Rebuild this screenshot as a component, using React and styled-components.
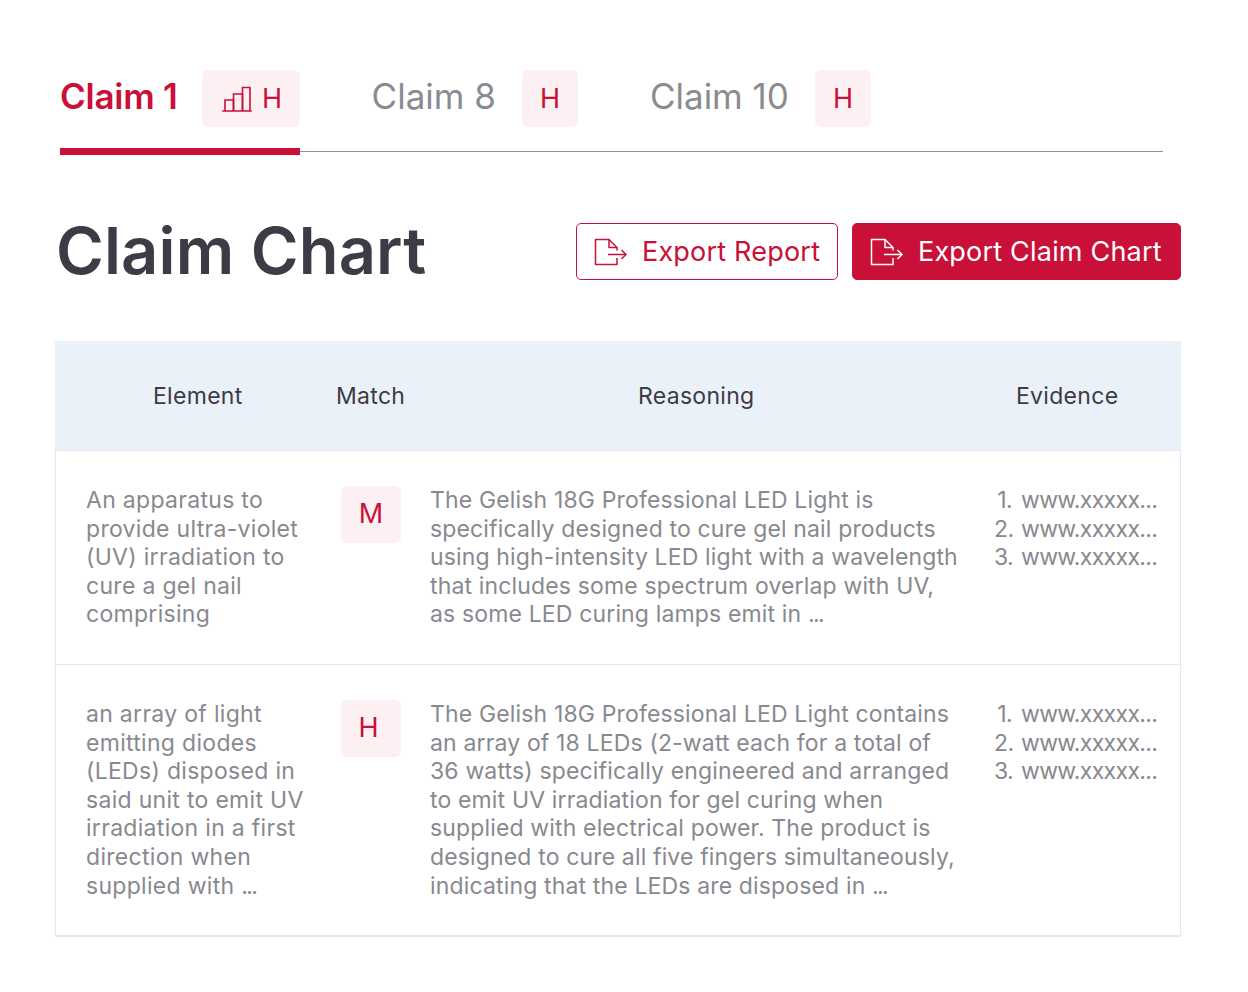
import React from 'react'
import styled, { createGlobalStyle } from 'styled-components'

const Global = createGlobalStyle`
  html, body { margin: 0; padding: 0; background: #fff; }
  body { font-family: Inter, "Noto Sans", "Liberation Sans", sans-serif; }
`

const RED = '#c81038'

const Page = styled.div`
  width: 1248px;
  height: 992px;
  box-sizing: border-box;
  padding: 70px 67px 0 55px;
  overflow: hidden;
`

const Tabs = styled.div`
  display: flex;
  margin: 0 18px 0 5px;
  border-bottom: 1px solid #8e8e93;
  height: 82px;
  box-sizing: border-box;
`

const Tab = styled.div`
  display: flex;
  align-items: flex-start;
  gap: ${p => p.$gap}px;
  height: 85px;
  box-sizing: border-box;
  margin-right: 72px;
  border-bottom: ${p => (p.$active ? `7px solid ${RED}` : '0')};
`

const TabLabel = styled.span`
  font-size: 35px;
  line-height: 52px;
  letter-spacing: ${p => (p.$active ? '-0.25px' : '0')};
  font-weight: ${p => (p.$active ? 600 : 400)};
  color: ${p => (p.$active ? RED : '#8a8b90')};
`

const Badge = styled.span`
  display: flex;
  align-items: center;
  justify-content: center;
  gap: ${p => p.$gap || 7}px;
  box-sizing: border-box;
  width: ${p => p.$w}px;
  height: 57px;
  padding-left: ${p => p.$pl || 0}px;
  border-radius: 6px;
  background: #fdf0f2;
  color: ${RED};
  font-size: 27px;
  font-weight: 400;
`

const TitleRow = styled.div`
  display: flex;
  justify-content: space-between;
  align-items: center;
  margin-top: 68px;
  height: 62px;
`

const Title = styled.h1`
  margin: 0 0 0 1px;
  font-size: 65px;
  font-weight: 600;
  letter-spacing: 0.1px;
  color: #3c3c46;
  line-height: 62px;
`

const Actions = styled.div`
  display: flex;
  gap: 14px;
`

const Button = styled.button`
  display: flex;
  align-items: center;
  gap: 15px;
  height: 57px;
  box-sizing: border-box;
  padding: 1px 17px 0;
  width: ${p => p.$w}px;
  border-radius: 5px;
  border: 1.5px solid ${RED};
  background: ${p => (p.$solid ? RED : '#fff')};
  color: ${p => (p.$solid ? '#fff' : RED)};
  font: inherit;
  font-size: 27px;
  letter-spacing: 0.2px;
  white-space: nowrap;
`

const Table = styled.div`
  margin-top: 59px;
  width: 1126px;
  box-sizing: border-box;
  border: 1px solid #e4e8f2;
  border-top: 0;
  border-bottom-width: 2px;
`

const Head = styled.div`
  display: grid;
  height: 109px;
  align-items: center;
  background: #ebf1f9;
  border-bottom: 1px solid #e4e8f2;
  margin: 0 -1px;
  font-size: 23px;
  letter-spacing: 0.3px;
  color: #3c3c46;
`

const HeadCell = styled.div`
  position: relative;
  left: ${p => p.$x}px;
  grid-column: 1;
  grid-row: 1;
`

const Row = styled.div`
  display: grid;
  grid-template-columns: 285px 89px 556px 1fr;
  box-sizing: border-box;
  height: ${p => p.$h}px;
  padding-top: 35px;
  border-bottom: ${p => (p.$last ? '0' : '1px solid #e4e8f2')};
  font-size: 23px;
  line-height: 28.6px;
  color: #88898e;
`

const Cell = styled.div`
  white-space: nowrap;
  padding-left: ${p => p.$pl || 0}px;
  letter-spacing: ${p => p.$ls};
`

const Line = styled.span`
  display: block;
`

const Dots = styled.span`
  letter-spacing: -1.6px;
`

const EvidenceList = styled.ol`
  margin: 0;
  padding: 0;
  list-style: none;
  display: grid;
  grid-template-columns: 18px auto;
  column-gap: 9px;
  justify-content: start;
`

const Num = styled.span`
  text-align: right;
`

const MatchBadge = styled(Badge)`
  width: 60px;
  padding-right: ${p => p.$pr}px;
`

const ChartIcon = () => (
  <svg width="30" height="26" viewBox="0 0 30 26" fill="none" stroke="currentColor" strokeWidth="1.6">
    <path d="M0.8 25H29.2" strokeLinecap="round" />
    <path d="M3 25V14H11.5V25" />
    <path d="M11.5 25V8H20.5V25" />
    <path d="M20.5 25V1.5H28V25" />
  </svg>
)

const ExportIcon = () => (
  <svg width="33" height="28" viewBox="0 0 33 28" fill="none" stroke="currentColor" strokeWidth="1.5" style={{ flexShrink: 0 }}>
    <path d="M23 20V26.5H1.5V1.5H15L23 9.5V12.5" strokeLinejoin="round" />
    <path d="M15 1.5V9.5H23" strokeLinejoin="round" />
    <path d="M14 16.5H32" />
    <path d="M27.5 12L32 16.5L27.5 21" />
  </svg>
)

const Text = ({ lines }) =>
  lines.map(l => (
    <Line key={l}>
      {l.endsWith('...') ? (
        <>
          {l.slice(0, -3)}
          <Dots>...</Dots>
        </>
      ) : (
        l
      )}
    </Line>
  ))

const rows = [
  {
    h: 214,
    level: 'M',
    pr: 0,
    element: ['An apparatus to', 'provide ultra-violet', '(UV) irradiation to', 'cure a gel nail', 'comprising'],
    reasoning: [
      'The Gelish 18G Professional LED Light is',
      'specifically designed to cure gel nail products',
      'using high-intensity LED light with a wavelength',
      'that includes some spectrum overlap with UV,',
      'as some LED curing lamps emit in ...',
    ],
  },
  {
    h: 270,
    level: 'H',
    pr: 5,
    element: ['an array of light', 'emitting diodes', '(LEDs) disposed in', 'said unit to emit UV', 'irradiation in a first', 'direction when', 'supplied with ...'],
    reasoning: [
      'The Gelish 18G Professional LED Light contains',
      'an array of 18 LEDs (2-watt each for a total of',
      '36 watts) specifically engineered and arranged',
      'to emit UV irradiation for gel curing when',
      'supplied with electrical power. The product is',
      'designed to cure all five fingers simultaneously,',
      'indicating that the LEDs are disposed in ...',
    ],
  },
]

const App = () => {
  return (
    <Page>
      <Global />
      <Tabs>
        <Tab $active $gap={24}>
          <TabLabel $active>Claim 1</TabLabel>
          <Badge $w={98} $gap={10} $pl={3}>
            <ChartIcon />H
          </Badge>
        </Tab>
        <Tab $gap={26}>
          <TabLabel>Claim 8</TabLabel>
          <Badge $w={56}>H</Badge>
        </Tab>
        <Tab $gap={26}>
          <TabLabel>Claim 10</TabLabel>
          <Badge $w={56}>H</Badge>
        </Tab>
      </Tabs>

      <TitleRow>
        <Title>Claim Chart</Title>
        <Actions>
          <Button $w={262}>
            <ExportIcon />
            Export Report
          </Button>
          <Button $solid $w={329}>
            <ExportIcon />
            Export Claim Chart
          </Button>
        </Actions>
      </TitleRow>

      <Table>
        <Head>
          <HeadCell $x={98}>Element</HeadCell>
          <HeadCell $x={281}>Match</HeadCell>
          <HeadCell $x={583}>Reasoning</HeadCell>
          <HeadCell $x={961}>Evidence</HeadCell>
        </Head>
        {rows.map((row, i) => (
          <Row key={row.level} $h={row.h} $last={i === rows.length - 1}>
            <Cell $pl={30} $ls="0.3px">
              <Text lines={row.element} />
            </Cell>
            <Cell>
              <MatchBadge $pr={row.pr}>{row.level}</MatchBadge>
            </Cell>
            <Cell $ls="0.15px">
              <Text lines={row.reasoning} />
            </Cell>
            <Cell $pl={8} $ls="-0.65px">
              <EvidenceList>
                {[1, 2, 3].map(n => (
                  <React.Fragment key={n}>
                    <Num>{n}.</Num>
                    <span>www.xxxxx...</span>
                  </React.Fragment>
                ))}
              </EvidenceList>
            </Cell>
          </Row>
        ))}
      </Table>
    </Page>
  )
}

export default App
